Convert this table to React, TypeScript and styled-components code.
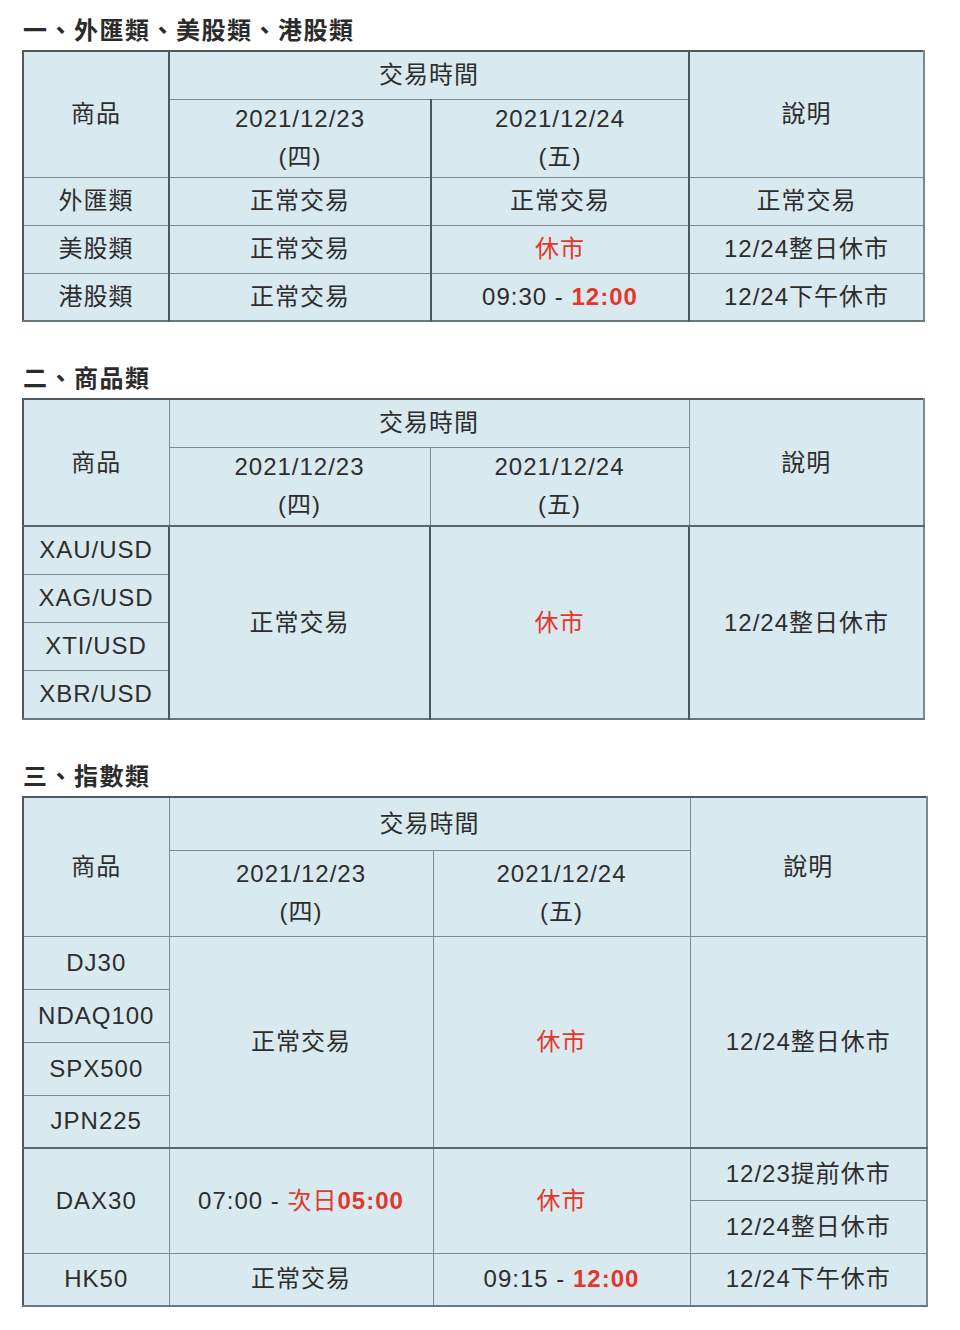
import React from 'react'
import styled, { createGlobalStyle, css } from 'styled-components'

const GlobalStyle = createGlobalStyle`
  body {
    margin: 0;
    background: #ffffff;
    font-family: "Liberation Sans", "Noto Sans CJK TC", sans-serif;
    color: #2d2d2d;
  }
`

type Widths = number[]

const table1Cols: Widths = [146, 262, 258, 235]
const table2Cols: Widths = [146, 261, 259, 235]
const table3Cols: Widths = [146, 264, 257, 237]

const Page = () => {
  return (
    <Wrapper>
      <Section>
        <Heading>一、外匯類、美股類、港股類</Heading>
        <Table $width={901}>
          <colgroup>
            {table1Cols.map((w, i) => <col key={i} style={{ width: w }} />)}
          </colgroup>
          <tbody>
            <Row $h={48}>
              <Cell rowSpan={2}>商品</Cell>
              <Cell colSpan={2} $dark>交易時間</Cell>
              <Cell rowSpan={2} $dark>說明</Cell>
            </Row>
            <Row $h={78}>
              <Cell $dark>2021/12/23<br />(四)</Cell>
              <Cell $dark>2021/12/24<br />(五)</Cell>
            </Row>
            <Row $h={48}>
              <Cell>外匯類</Cell>
              <Cell $dark>正常交易</Cell>
              <Cell $dark>正常交易</Cell>
              <Cell $dark>正常交易</Cell>
            </Row>
            <Row $h={48}>
              <Cell>美股類</Cell>
              <Cell $dark>正常交易</Cell>
              <Cell $dark><Red>休市</Red></Cell>
              <Cell $dark>12/24整日休市</Cell>
            </Row>
            <Row $h={48}>
              <Cell>港股類</Cell>
              <Cell $dark>正常交易</Cell>
              <Cell $dark>09:30 - <Red $bold>12:00</Red></Cell>
              <Cell $dark>12/24下午休市</Cell>
            </Row>
          </tbody>
        </Table>
      </Section>

      <Section>
        <Heading>二、商品類</Heading>
        <Table $width={901}>
          <colgroup>
            {table2Cols.map((w, i) => <col key={i} style={{ width: w }} />)}
          </colgroup>
          <tbody>
            <Row $h={48}>
              <Cell rowSpan={2}>商品</Cell>
              <Cell colSpan={2}>交易時間</Cell>
              <Cell rowSpan={2}>說明</Cell>
            </Row>
            <Row $h={79}>
              <Cell>2021/12/23<br />(四)</Cell>
              <Cell>2021/12/24<br />(五)</Cell>
            </Row>
            <Row $h={48} $topDark>
              <Cell>XAU/USD</Cell>
              <Cell rowSpan={4} $dark>正常交易</Cell>
              <Cell rowSpan={4} $dark><Red>休市</Red></Cell>
              <Cell rowSpan={4} $dark>12/24整日休市</Cell>
            </Row>
            <Row $h={48}><Cell>XAG/USD</Cell></Row>
            <Row $h={48}><Cell>XTI/USD</Cell></Row>
            <Row $h={49}><Cell>XBR/USD</Cell></Row>
          </tbody>
        </Table>
      </Section>

      <Section>
        <Heading>三、指數類</Heading>
        <Table $width={904}>
          <colgroup>
            {table3Cols.map((w, i) => <col key={i} style={{ width: w }} />)}
          </colgroup>
          <tbody>
            <Row $h={53}>
              <Cell rowSpan={2}>商品</Cell>
              <Cell colSpan={2}>交易時間</Cell>
              <Cell rowSpan={2}>說明</Cell>
            </Row>
            <Row $h={86}>
              <Cell>2021/12/23<br />(四)</Cell>
              <Cell>2021/12/24<br />(五)</Cell>
            </Row>
            <Row $h={53}>
              <Cell>DJ30</Cell>
              <Cell rowSpan={4}>正常交易</Cell>
              <Cell rowSpan={4}><Red>休市</Red></Cell>
              <Cell rowSpan={4}>12/24整日休市</Cell>
            </Row>
            <Row $h={53}><Cell>NDAQ100</Cell></Row>
            <Row $h={53}><Cell>SPX500</Cell></Row>
            <Row $h={53}><Cell>JPN225</Cell></Row>
            <Row $h={52} $topDark>
              <Cell rowSpan={2}>DAX30</Cell>
              <Cell rowSpan={2}>07:00 - <Red>次日</Red><Red $bold>05:00</Red></Cell>
              <Cell rowSpan={2}><Red>休市</Red></Cell>
              <Cell>12/23提前休市</Cell>
            </Row>
            <Row $h={53}><Cell>12/24整日休市</Cell></Row>
            <Row $h={53}>
              <Cell>HK50</Cell>
              <Cell>正常交易</Cell>
              <Cell>09:15 - <Red $bold>12:00</Red></Cell>
              <Cell>12/24下午休市</Cell>
            </Row>
          </tbody>
        </Table>
      </Section>
    </Wrapper>
  )
}

export default function App() {
  return (
    <>
      <GlobalStyle />
      <Page />
    </>
  )
}

const Wrapper = styled.div`
  display: flex;
  flex-direction: column;
  gap: 40px;
  padding: 14px 0 20px 22px;
  width: 960px;
  box-sizing: border-box;
`

const Section = styled.section`
  display: flex;
  flex-direction: column;
  gap: 2px;
`

const Heading = styled.h2`
  margin: 0;
  padding-left: 1px;
  font-size: 24px;
  line-height: 34px;
  font-weight: 700;
  letter-spacing: 1.5px;
  color: #2b2b2b;
`

const Table = styled.table<{ $width: number }>`
  width: ${(p) => p.$width}px;
  table-layout: fixed;
  border-collapse: collapse;
  background: #d9e9f0;
  border-top: 2px solid #4e585d;
  border-left: 2px solid #4e585d;
  border-right: 2px solid #7b898f;
  border-bottom: 2px solid #6a777d;
`

const Row = styled.tr<{ $h: number; $topDark?: boolean }>`
  height: ${(p) => p.$h}px;

  ${(p) => p.$topDark && css`
    td { border-top: 2px solid #5c676c; }
  `}
`

const Cell = styled.td<{ $dark?: boolean }>`
  padding: 0;
  text-align: center;
  vertical-align: middle;
  font-size: 24px;
  line-height: 38px;
  letter-spacing: 1px;
  color: #2d2d2d;
  border: 1px solid #7f8d93;

  ${(p) => p.$dark && css`
    border-left: 2px solid #4e585d;
  `}
`

const Red = styled.span<{ $bold?: boolean }>`
  color: #e3372b;
  font-weight: ${(p) => (p.$bold ? 700 : 400)};
`
